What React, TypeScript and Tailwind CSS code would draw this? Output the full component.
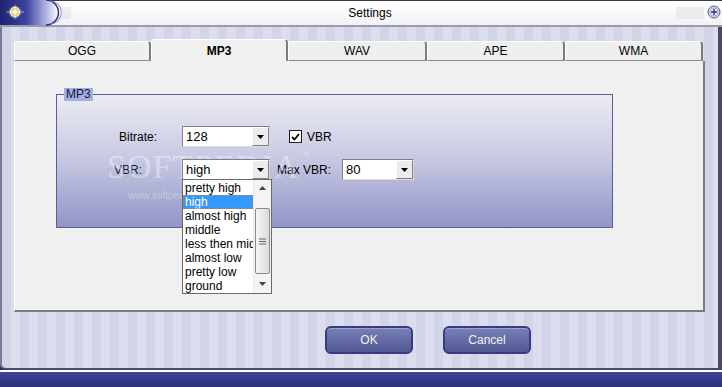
import React from "react";

const font = { fontFamily: '"Liberation Sans", Arial, sans-serif' };

const tabs = ["OGG", "MP3", "WAV", "APE", "WMA"];
const tabWidths = ["w-[137px]", "w-[137px]", "w-[139px]", "w-[138px]", "w-[138px]"];

const vbrOptions = [
  "pretty high",
  "high",
  "almost high",
  "middle",
  "less then middle",
  "almost low",
  "pretty low",
  "ground",
];

const DownArrow = () => (
  <svg width="7" height="4" viewBox="0 0 7 4">
    <path d="M0 0h7L3.5 4z" fill="#000" />
  </svg>
);

const Combo = ({ value, width }: { value: string; width: string }) => (
  <div className={`${width} h-[21px] flex bg-white border border-[#7f7f7f] border-r-[#dcdcdc] border-b-[#dcdcdc]`}>
    <div className="flex-1 flex items-center pl-[3px] text-[13px] text-black leading-none">{value}</div>
    <div className="w-[17px] h-full flex items-center justify-center bg-[#ececec] border border-[#fff] border-r-[#808080] border-b-[#808080]">
      <DownArrow />
    </div>
  </div>
);

const TitleBar = () => (
  <div className="h-[27px] relative flex items-center bg-gradient-to-b from-[#ffffff] to-[#f2f2f4] border-t border-t-[#3a3a48] border-b-2 border-b-[#9a9aaa]">
    <svg width="72" height="26" viewBox="0 0 72 26" className="shrink-0">
      <defs>
        <linearGradient id="pill" x1="0" x2="1" y1="0" y2="0">
          <stop offset="0" stopColor="#1e2470" />
          <stop offset="0.45" stopColor="#3a42a0" />
          <stop offset="0.8" stopColor="#b4b8e4" />
          <stop offset="1" stopColor="#ffffff" />
        </linearGradient>
        <radialGradient id="glow">
          <stop offset="0" stopColor="#ffffe0" />
          <stop offset="0.4" stopColor="#f0e070" />
          <stop offset="1" stopColor="#f0e070" stopOpacity="0" />
        </radialGradient>
      </defs>
      <path d="M0 0h46a12.5 12.5 0 0 1 0 25H0z" fill="url(#pill)" />
      <path d="M46 0a12.5 12.5 0 0 1 0 25" fill="none" stroke="#2a2f78" strokeWidth="1.5" />
      <path d="M50 1a11.5 11.5 0 0 1 0 23" fill="none" stroke="#7a7eb8" strokeWidth="1" />
      <circle cx="15" cy="12" r="7" fill="url(#glow)" />
      <circle cx="15" cy="12" r="4.5" fill="none" stroke="#ffffff" strokeWidth="1.2" />
      <path d="M6 12h18M15 5v14" stroke="#ffffff" strokeWidth="0.8" opacity="0.7" />
      <path d="M61 8h10M61 10h10M61 12h10M61 14h10M61 16h10M61 18h10" stroke="#d0d0d8" strokeWidth="0.6" />
    </svg>
    <div className="flex-1 text-center text-[12px] text-black pr-[6px]">Settings</div>
    <svg width="48" height="26" viewBox="0 0 48 26" className="shrink-0">
      <path d="M2 8h28M2 10h28M2 12h28M2 14h28M2 16h28M2 18h28" stroke="#d0d0d8" strokeWidth="0.6" />
      <circle cx="40" cy="12" r="6" fill="#d8d8e4" stroke="#5a5e90" strokeWidth="1" />
      <circle cx="40" cy="12" r="4" fill="#eeeef6" stroke="#9a9ec8" strokeWidth="0.8" />
      <path d="M37 12h6M40 9v6" stroke="#2a2f78" strokeWidth="1.4" />
    </svg>
  </div>
);

const Tabs = () => (
  <div className="h-[22px] flex items-end">
    {tabs.map((t, i) => {
      const active = t === "MP3";
      return (
        <div
          key={t}
          className={`${tabWidths[i]} ${
            active
              ? "h-[22px] font-bold border-b-0 bg-[#f0f0f0]"
              : "h-[20px] border-b border-b-[#8a8a8a] bg-[#efefef]"
          } flex items-center justify-center text-[12px] text-black border-l border-l-[#ffffff] border-t border-t-[#ffffff] border-r-2 border-r-[#7c7c7c] rounded-tr-[4px] rounded-tl-[2px]`}
        >
          {t}
        </div>
      );
    })}
  </div>
);

const DropList = () => (
  <div className="absolute top-[20px] left-0 w-[90px] h-[115px] bg-white border border-[#6a6a6a] flex z-10">
    <div className="flex-1 overflow-hidden pt-[1px]">
      {vbrOptions.map((o) => (
        <div
          key={o}
          className={`h-[14px] leading-[14px] pl-[2px] text-[12px] whitespace-nowrap ${
            o === "high" ? "bg-[#3399ff] text-white outline-1 outline-dotted outline-[#c08040] -outline-offset-1" : "text-black"
          }`}
        >
          {o}
        </div>
      ))}
    </div>
    <div className="w-[18px] h-full flex flex-col items-center bg-[#f4f4f4] border-l border-l-[#eaeaea]">
      <div className="h-[16px] flex items-center justify-center">
        <svg width="7" height="4" viewBox="0 0 7 4">
          <path d="M0 4h7L3.5 0z" fill="#444" />
        </svg>
      </div>
      <div className="mt-[12px] w-[15px] h-[66px] rounded-[2px] border border-[#8a8a8a] bg-gradient-to-r from-[#f6f6f6] to-[#dcdcdc] flex items-center justify-center">
        <svg width="7" height="7" viewBox="0 0 7 7">
          <path d="M0 1h7M0 3.5h7M0 6h7" stroke="#666" strokeWidth="1" />
        </svg>
      </div>
      <div className="flex-1 flex items-center justify-center">
        <svg width="7" height="4" viewBox="0 0 7 4">
          <path d="M0 0h7L3.5 4z" fill="#444" />
        </svg>
      </div>
    </div>
  </div>
);

const GroupBox = () => (
  <div className="relative ml-[41px] mt-[33px] w-[557px] h-[134px] border border-[#5a5ea0] bg-gradient-to-b from-[#ececf2] via-[#c6c7e2] to-[#9294c6]">
    <div className="absolute -top-[7px] left-[7px] h-[13px] px-[2px] bg-[#a4b0dc] text-[12px] leading-[13px] text-[#10144a]">
      MP3
    </div>

    {/* watermark */}
    <div className="absolute left-[50px] top-[55px] text-[34px] leading-none text-white/40 tracking-[1px] pointer-events-none" style={{ fontFamily: '"Liberation Serif", serif' }}>
      SOFTPEDIA<span className="text-[10px] align-top">™</span>
    </div>
    <div className="absolute left-[71px] top-[93px] text-[10px] text-white/35 pointer-events-none">www.softpedia.com</div>

    <div className="pt-[31px] flex flex-col">
      <div className="h-[21px] flex items-center">
        <div className="ml-[62px] w-[63px] text-[12px] text-black">Bitrate:</div>
        <Combo value="128" width="w-[88px]" />
        <div className="ml-[19px] w-[13px] h-[13px] bg-white border border-[#1c1c1c] flex items-center justify-center">
          <svg width="9" height="8" viewBox="0 0 9 8">
            <path d="M1 4l2.5 2.5L8 1" fill="none" stroke="#000" strokeWidth="1.8" />
          </svg>
        </div>
        <div className="ml-[5px] text-[12px] text-black">VBR</div>
      </div>
      <div className="mt-[12px] h-[21px] flex items-center">
        <div className="ml-[57px] w-[68px] text-[12px] text-[#202040]">VBR:</div>
        <div className="relative">
          <Combo value="high" width="w-[88px]" />
          <DropList />
        </div>
        <div className="ml-[7px] w-[65px] text-[12px] text-black">Max VBR:</div>
        <Combo value="80" width="w-[72px]" />
      </div>
    </div>
  </div>
);

const Button = ({ label }: { label: string }) => (
  <div className="w-[88px] h-[28px] rounded-[6px] border-2 border-[#363c80] bg-gradient-to-b from-[#7a80b8] via-[#636aa6] to-[#525994] shadow-[inset_0_1px_0_#9aa0d0] flex items-center justify-center text-[12px] text-[#f4f4e6]">
    {label}
  </div>
);

export default function App() {
  return (
    <div className="w-[722px] h-[387px] flex flex-col overflow-hidden bg-[#23286a]" style={font}>
      <TitleBar />
      <div className="h-[343px] flex flex-col border-l-2 border-l-[#7a7a94] border-r-[4px] border-r-[#4a4a66] border-b-2 border-b-[#4a4a70] rounded-bl-[6px] px-[12px] pt-[12px] bg-[repeating-linear-gradient(90deg,#d2d4e8_0px,#d2d4e8_9px,#dcdeee_9px,#dcdeee_18px)]">
        <Tabs />
        <div className="h-[251px] w-[691px] bg-[#f0f0f0] border-l border-l-[#ffffff] border-r-2 border-r-[#7c7c7c] border-b-2 border-b-[#7c7c7c]">
          <GroupBox />
        </div>
        <div className="mt-[14px] flex gap-[30px] ml-[311px]">
          <Button label="OK" />
          <Button label="Cancel" />
        </div>
      </div>
      <div className="h-[2px] bg-white" />
      <div className="flex-1 bg-gradient-to-b from-[#404696] to-[#2a3078]" />
    </div>
  );
}
